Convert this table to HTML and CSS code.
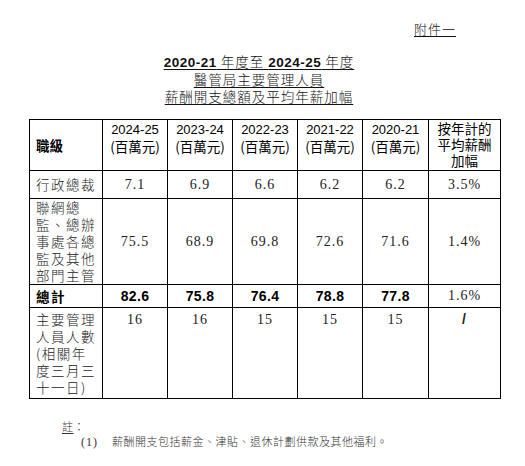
FILE: index.html
```html
<!DOCTYPE html>
<html lang="zh-Hant">
<head>
    <meta charset="UTF-8">
    <meta name="viewport" content="width=device-width, initial-scale=1.0">
    <title>附件一</title>
    <link rel="stylesheet" href="styles.css">
</head>
<body>
    <div class="attach"><u>附件一</u></div>

    <div class="title">
        <u><span class="num">2020-21</span> 年度至 <span class="num">2024-25</span> 年度</u><br>
        <u>醫管局主要管理人員</u><br>
        <u>薪酬開支總額及平均年薪加幅</u>
    </div>

    <table class="pay">
        <colgroup>
            <col style="width: 73px">
            <col style="width: 65px">
            <col style="width: 65px">
            <col style="width: 65px">
            <col style="width: 65px">
            <col style="width: 66px">
            <col style="width: 72px">
        </colgroup>
        <tr class="head">
            <th class="grade">職級</th>
            <th><span class="num">2024-25</span><br>(百萬元)</th>
            <th><span class="num">2023-24</span><br>(百萬元)</th>
            <th><span class="num">2022-23</span><br>(百萬元)</th>
            <th><span class="num">2021-22</span><br>(百萬元)</th>
            <th><span class="num">2020-21</span><br>(百萬元)</th>
            <th>按年計的<br>平均薪酬<br>加幅</th>
        </tr>
        <tr class="r-ceo">
            <td class="label">行政總裁</td>
            <td>7.1</td>
            <td>6.9</td>
            <td>6.6</td>
            <td>6.2</td>
            <td>6.2</td>
            <td>3.5%</td>
        </tr>
        <tr class="r-dirs">
            <td class="label">聯網總<br>監、總辦<br>事處各總<br>監及其他<br>部門主管</td>
            <td>75.5</td>
            <td>68.9</td>
            <td>69.8</td>
            <td>72.6</td>
            <td>71.6</td>
            <td>1.4%</td>
        </tr>
        <tr class="r-total">
            <td class="label">總計</td>
            <td>82.6</td>
            <td>75.8</td>
            <td>76.4</td>
            <td>78.8</td>
            <td>77.8</td>
            <td class="plain">1.6%</td>
        </tr>
        <tr class="r-count">
            <td class="label">主要管理<br>人員人數<br>(相關年<br>度三月三<br>十一日)</td>
            <td>16</td>
            <td>16</td>
            <td>15</td>
            <td>15</td>
            <td>15</td>
            <td class="slash">/</td>
        </tr>
    </table>

    <div class="notes">
        <div><u>註</u>：</div>
        <div class="note-item"><span class="note-no">(1)</span>薪酬開支包括薪金、津貼、退休計劃供款及其他福利。</div>
    </div>
</body>
</html>
```

FILE: styles.css
```css
body { margin: 0; color: #111; font-family: "Liberation Serif", "Noto Sans CJK TC", serif; background: #fff; }
u { text-decoration: underline; text-underline-offset: 2px; text-decoration-thickness: 1px; }

.attach { margin-top: 20px; padding-right: 69px; text-align: right; font-size: 13px; line-height: 17px; letter-spacing: 1px; font-family: "Noto Sans CJK TC", sans-serif; font-weight: 300; }

.title { margin-top: 16px; padding-right: 7px; text-align: center; font-size: 13.5px; line-height: 17px; letter-spacing: 1px; font-family: "Noto Sans CJK TC", sans-serif; font-weight: 300; }
.title .num { font-family: "Liberation Sans", sans-serif; font-weight: bold; letter-spacing: 0.5px; }

.pay { margin: 14px 0 0 29px; width: 471px; table-layout: fixed; border-collapse: collapse; font-size: 13.5px; }
.pay th, .pay td { border: 1px solid #000; padding: 0; text-align: center; }
.pay th { vertical-align: top; line-height: 16px; font-family: "Noto Sans CJK TC", sans-serif; font-weight: 400; color: #000; }
.pay th .num { font-family: "Liberation Sans", sans-serif; font-weight: normal; font-size: 13px; }
.pay th.grade { vertical-align: middle; text-align: left; padding-left: 6px; font-weight: bold; }
.pay td { vertical-align: middle; font-size: 14px; letter-spacing: 1px; color: #222; }
.pay td.label { text-align: left; padding-left: 6px; font-family: "Noto Sans CJK TC", sans-serif; font-weight: 300; font-size: 13.5px; letter-spacing: 1.5px; line-height: 17px; }

.head { height: 51px; }
.r-ceo { height: 28px; }
.r-dirs { height: 85px; }
.r-total { height: 23px; }
.r-total td { font-family: "Liberation Sans", sans-serif; font-weight: bold; letter-spacing: 0.3px; color: #000; }
.r-total td.label { font-family: "Noto Sans CJK TC", sans-serif; font-weight: bold; }
.r-total td.plain { font-family: "Liberation Serif", serif; font-weight: normal; letter-spacing: 1px; color: #222; }
.r-count { height: 91px; }
.r-count td { vertical-align: top; padding-top: 3px; line-height: 17px; }
.r-count td.slash { font-family: "Liberation Sans", sans-serif; font-weight: bold; }

.notes { margin: 20px 0 0 62px; font-size: 11px; line-height: 15px; font-family: "Noto Sans CJK TC", sans-serif; font-weight: 300; color: #333; letter-spacing: 0.5px; }
.note-item { padding-left: 19px; }
.note-no { display: inline-block; width: 31px; font-family: "Liberation Serif", serif; font-size: 12px; letter-spacing: 1px; }
```
